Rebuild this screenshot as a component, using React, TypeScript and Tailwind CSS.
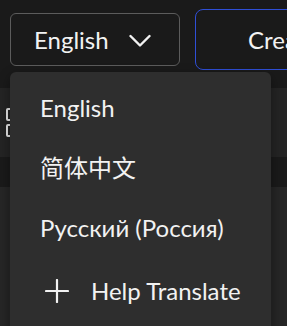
const font = { fontFamily: '"Lato", "Noto Sans CJK SC", sans-serif' };

const Chevron = () => (
  <svg width="22" height="14" viewBox="0 0 22 14" fill="none" stroke="currentColor" strokeWidth="2.4" strokeLinecap="round" strokeLinejoin="round">
    <polyline points="1.5,2 11,11.5 20.5,2" />
  </svg>
);

const PlusIcon = () => (
  <svg width="24" height="24" viewBox="0 0 24 24" fill="none" stroke="currentColor" strokeWidth="2.2" strokeLinecap="round">
    <line x1="12" y1="1" x2="12" y2="23" />
    <line x1="1" y1="12" x2="23" y2="12" />
  </svg>
);

const App = () => {
  const langs = ["English", "简体中文", "Русский (Россия)"];

  return (
    <div className="relative h-[326px] w-[287px] overflow-hidden bg-[#1a1a1a] text-[#f2f2f2]" style={font}>
      {/* Top bar */}
      <div className="flex h-[79px] items-center gap-[15px] pl-[10px]">
        <button className="flex h-[53px] w-[170px] shrink-0 items-center rounded-[6px] border border-[#5c5c5c] pl-[23px] text-[24px]">
          <span>English</span>
          <span className="ml-[20px] mt-[2px]">
            <Chevron />
          </span>
        </button>
        <button className="flex h-[61px] w-[200px] shrink-0 items-center rounded-[8px] border border-[#2f4fd6] pl-[52px] text-[24px]">
          Create
        </button>
      </div>

      {/* Content rows under the menu */}
      <div className="mt-[9px] flex h-[69px] items-center bg-[#242424] pl-[6px]">
        <div className="flex flex-col gap-[3px]">
          <span className="h-[13px] w-[8px] rounded-[2px] border-2 border-[#e8e8e8]" />
          <span className="h-[13px] w-[8px] rounded-[2px] border-2 border-[#e8e8e8]" />
        </div>
      </div>
      <div className="mt-[30px] h-[200px] bg-[#262626]" />

      {/* Dropdown menu */}
      <div className="absolute left-[10px] top-[72px] h-[280px] w-[261px] rounded-[6px] bg-[#2e2e2e] pt-[6px] shadow-[0_4px_12px_rgba(0,0,0,0.4)]">
        {langs.map((l) => (
          <div key={l} className="flex h-[60px] items-center pl-[30px] text-[24px]">
            {l}
          </div>
        ))}
        <div className="mt-[3px] flex h-[60px] items-center pl-[35px] text-[24px]">
          <PlusIcon />
          <span className="ml-[22px]">Help Translate</span>
        </div>
      </div>
    </div>
  );
};

export default App;
